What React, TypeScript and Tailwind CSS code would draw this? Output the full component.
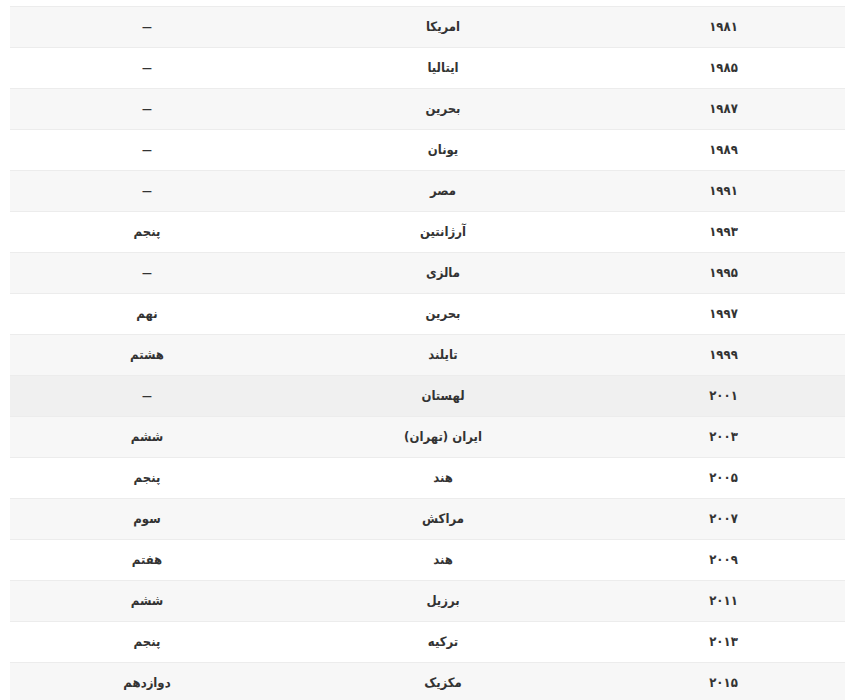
const rows: [string, string, string][] = [
  ["۱۹۸۱", "امریکا", "–"],
  ["۱۹۸۵", "ایتالیا", "–"],
  ["۱۹۸۷", "بحرین", "–"],
  ["۱۹۸۹", "یونان", "–"],
  ["۱۹۹۱", "مصر", "–"],
  ["۱۹۹۳", "آرژانتین", "پنجم"],
  ["۱۹۹۵", "مالزی", "–"],
  ["۱۹۹۷", "بحرین", "نهم"],
  ["۱۹۹۹", "تایلند", "هشتم"],
  ["۲۰۰۱", "لهستان", "–"],
  ["۲۰۰۳", "ایران (تهران)", "ششم"],
  ["۲۰۰۵", "هند", "پنجم"],
  ["۲۰۰۷", "مراکش", "سوم"],
  ["۲۰۰۹", "هند", "هفتم"],
  ["۲۰۱۱", "برزیل", "ششم"],
  ["۲۰۱۳", "ترکیه", "پنجم"],
  ["۲۰۱۵", "مکزیک", "دوازدهم"],
]

export default function App() {
  return (
    <div className="min-h-[700px] bg-white pt-[6px] pl-[10px] pr-[5px]" dir="rtl">
      <div
        className="text-[13px] font-bold text-[#333]"
        style={{ fontFamily: '"DejaVu Sans Condensed", "DejaVu Sans", sans-serif' }}
      >
        {rows.map(([year, country, rank], i) => {
          const hovered = i === 9
          const bg = hovered ? "bg-[#f0f0f0]" : i % 2 === 0 ? "bg-[#f7f7f7]" : "bg-white"
          return (
            <div
              key={year}
              className={`grid grid-cols-[243px_318px_274px] h-[41px] items-center border-t border-[#ececec] ${bg}`}
            >
              <div className="text-center">{year}</div>
              <div className="text-center">{country}</div>
              <div className="text-center">
                {rank === "–" ? (
                  <span className="text-[16px] font-normal font-['Liberation_Sans',sans-serif]">–</span>
                ) : (
                  rank
                )}
              </div>
            </div>
          )
        })}
      </div>
    </div>
  )
}
